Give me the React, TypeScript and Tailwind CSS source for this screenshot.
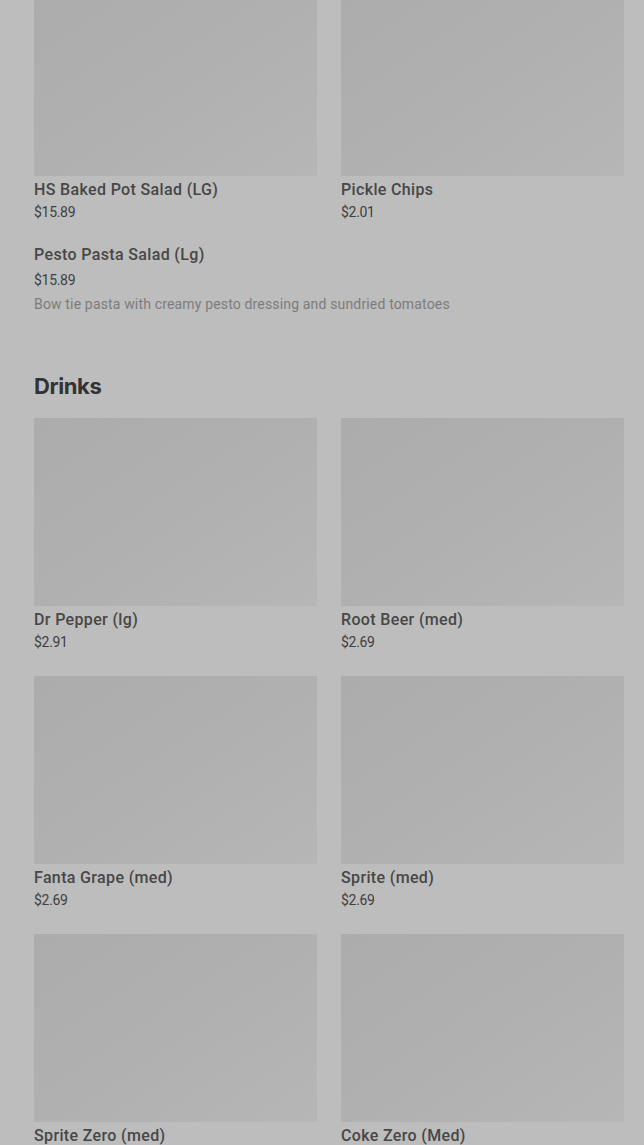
import React from "react";

interface Item {
    name: string;
    price: string;
}

const sides: Item[] = [
    { name: "HS Baked Pot Salad (LG)", price: "$15.89" },
    { name: "Pickle Chips", price: "$2.01" },
];

const drinks: Item[] = [
    { name: "Dr Pepper (lg)", price: "$2.91" },
    { name: "Root Beer (med)", price: "$2.69" },
    { name: "Fanta Grape (med)", price: "$2.69" },
    { name: "Sprite (med)", price: "$2.69" },
    { name: "Sprite Zero (med)", price: "$2.69" },
    { name: "Coke Zero (Med)", price: "$2.69" },
];

// Grid card with placeholder image
const ItemCard: React.FC<{ item: Item }> = ({ item }) => (
    <div className="flex flex-col">
        <div className="h-[188px] w-full bg-gradient-to-br from-[#acacac] via-[#b0b0b0] to-[#b6b6b6]" />
        <div className="mt-[4px] text-[16px] leading-5 font-medium tracking-[0.35px] text-[#474747]">{item.name}</div>
        <div className="mt-[3px] text-[14px] leading-[18px] tracking-[-0.3px] text-[#404040]">{item.price}</div>
    </div>
);

export default function App() {
    return (
        <div
            className="h-[1145px] overflow-hidden bg-[#bdbdbd] pl-[34px] pr-[20px]"
            style={{ fontFamily: "Roboto, 'Liberation Sans', sans-serif" }}
        >
            {/* Previous section tail */}
            <div className="mt-[-12px] grid grid-cols-2 gap-x-6">
                {sides.map((item) => (
                    <ItemCard key={item.name} item={item} />
                ))}
            </div>

            {/* Text-only item */}
            <div className="mt-6">
                <div className="text-[16px] leading-5 font-medium tracking-[0.35px] text-[#474747]">Pesto Pasta Salad (Lg)</div>
                <div className="mt-[6px] text-[14px] leading-[18px] tracking-[-0.3px] text-[#404040]">$15.89</div>
                <div className="mt-[6px] text-[14px] leading-[18px] tracking-[0.16px] text-[#7c7c7c]">
                    Bow tie pasta with creamy pesto dressing and sundried tomatoes
                </div>
            </div>

            {/* Drinks */}
            <h2
                className="mt-[57px] text-[22px] leading-8 font-bold tracking-[-0.4px] text-[#333333]"
                style={{ fontFamily: "Inter, 'Liberation Sans', sans-serif" }}
            >
                Drinks
            </h2>
            <div className="mt-4 grid grid-cols-2 gap-x-6 gap-y-[25px]">
                {drinks.map((item) => (
                    <ItemCard key={item.name} item={item} />
                ))}
            </div>
        </div>
    );
}
